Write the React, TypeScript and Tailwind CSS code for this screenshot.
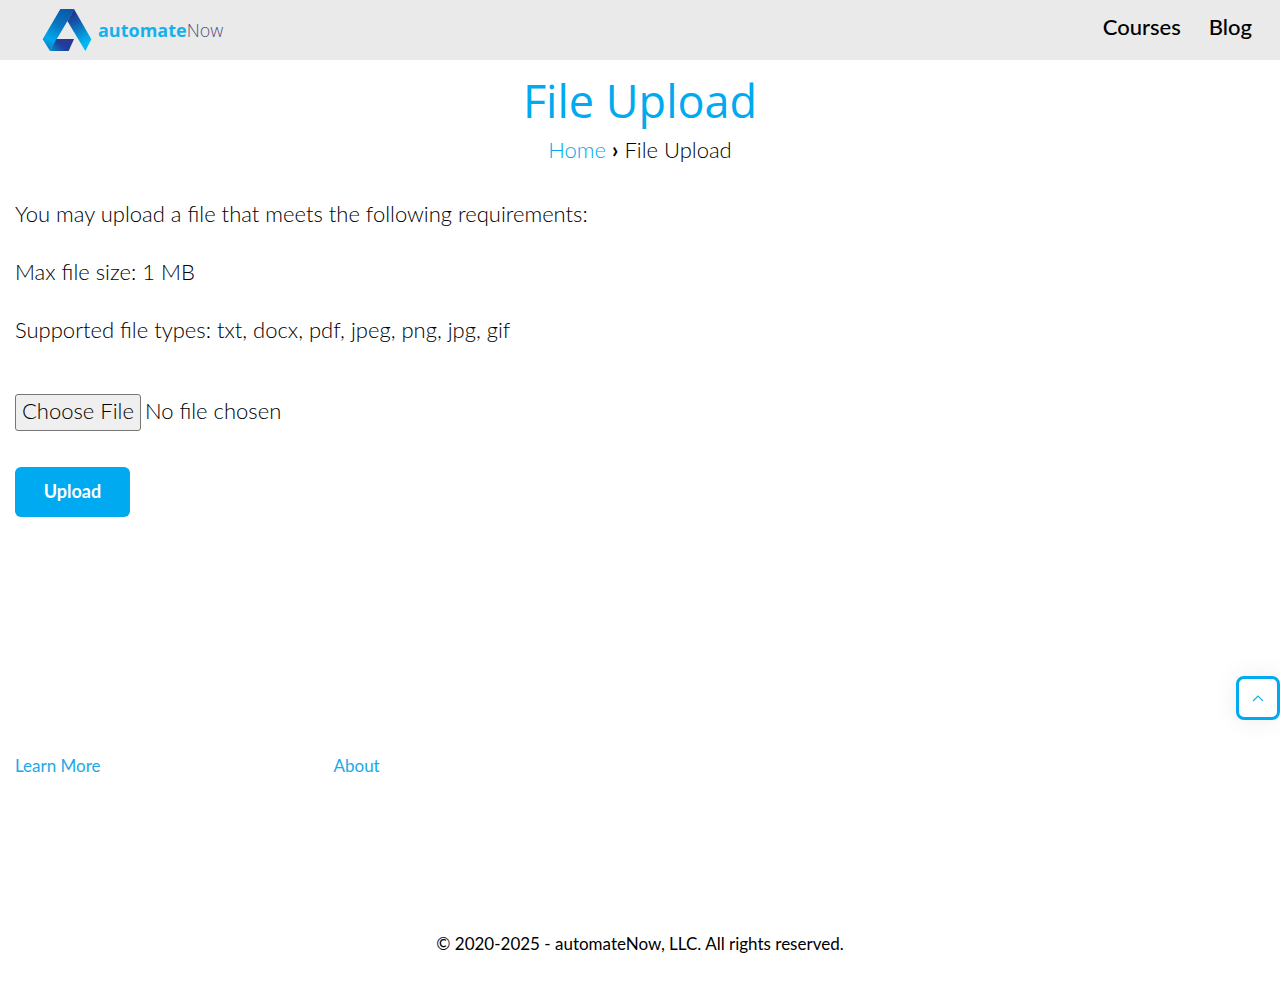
import React from "react";

function Logo() {
  return (
    <a href="#home" aria-label="automateNow" className="flex items-center font-['Open_Sans',sans-serif] text-lg leading-6">
      <svg viewBox="36 24 150 132" className="h-11 w-[50px]" aria-hidden="true">
        <defs>
          <linearGradient id="left" gradientUnits="userSpaceOnUse" x1="110" y1="27" x2="52" y2="142">
            <stop offset="0" stopColor="#0b57a8" />
            <stop offset="0.4" stopColor="#0874bd" />
            <stop offset="0.8" stopColor="#00a9ec" />
            <stop offset="1" stopColor="#0788cd" />
          </linearGradient>
          <linearGradient id="right" gradientUnits="userSpaceOnUse" x1="120" y1="35" x2="175" y2="140">
            <stop offset="0" stopColor="#2a2c88" />
            <stop offset="0.3" stopColor="#1357a8" />
            <stop offset="0.6" stopColor="#078bd1" />
            <stop offset="0.9" stopColor="#00b9f5" />
          </linearGradient>
          <linearGradient id="base" x1="0" y1="0.8" x2="1" y2="0.3">
            <stop offset="0" stopColor="#0a82c8" />
            <stop offset="0.5" stopColor="#203f9b" />
            <stop offset="1" stopColor="#2b3490" />
          </linearGradient>
        </defs>
        <path d="M112 63L132 27L184 118L166 153Z" fill="url(#right)" />
        <path d="M91 27H133L112 64L80 118L60 153L38 118Z" fill="url(#left)" />
        <path d="M79 117H132L116 153H60Z" fill="url(#base)" />
      </svg>
      <span className="pl-1.5 font-bold text-[#16b1ec]">automate</span>
      <span className="font-light text-[#55527e]">Now</span>
    </a>
  );
}

export default function App() {
  return (
    <div className="bg-white font-[Lato,sans-serif] text-[22px] font-light text-black">
      <header className="flex h-[60px] items-center justify-between bg-[#eaeaea] pr-7 pl-[42px]">
        <Logo />
        <nav className="flex gap-7 pb-1.5 leading-8 font-medium">
          <a href="#courses">Courses</a>
          <a href="#blog">Blog</a>
        </nav>
      </header>
      <main className="px-[15px]">
        <div className="pt-3 text-center">
          <h1 className="font-['Open_Sans',sans-serif] text-[45px] leading-[58px] font-normal text-[#00aaf0]">File Upload</h1>
          <nav aria-label="Breadcrumb" className="leading-10">
            <a href="#home" className="text-[#00aaf0]">Home</a>
            <span className="px-1.5 font-bold">›</span>
            <span>File Upload</span>
          </nav>
        </div>
        <div className="flex flex-col gap-[22px] pt-[26px] leading-9">
          <p>You may upload a file that meets the following requirements:</p>
          <p>Max file size: 1 MB</p>
          <p>Supported file types: txt, docx, pdf, jpeg, png, jpg, gif</p>
        </div>
        <form className="pt-[46px]" onSubmit={(e) => e.preventDefault()}>
          <input
            type="file"
            aria-label="Choose a file to upload"
            className="block h-[37px] w-full leading-8 file:mr-1 file:h-[37px] file:rounded-[3px] file:border file:border-solid file:border-[#767676] file:bg-[#efefef] file:px-1.5 file:pb-1 file:text-black"
          />
          <button type="submit" className="mt-9 h-[50px] w-[115px] rounded-md bg-[#00aaf0] pb-0.5 text-lg leading-6 font-bold text-white">
            Upload
          </button>
        </form>
      </main>
      <div className="flex justify-end pt-[159px]">
        <button type="button" aria-label="Back to top" className="flex size-11 items-center justify-center rounded-lg border-3 border-[#00aaf0] bg-white shadow-[0_0_24px_rgba(0,0,0,0.08)]">
          <svg viewBox="0 0 12 8" className="h-2 w-3" fill="none" stroke="#16adea" strokeWidth="1.2" aria-hidden="true">
            <path d="M1 7L6 2L11 7" />
          </svg>
        </button>
      </div>
      <footer className="text-[17px] leading-6 font-normal">
        <nav className="grid grid-cols-4 px-[15px] pt-[34px] text-[#1ba9e8]">
          <a href="#learn">Learn More</a>
          <a href="#about" className="pl-1.5">About</a>
        </nav>
        <p className="pt-[154px] pb-10 text-center">© 2020-2025 - automateNow, LLC. All rights reserved.</p>
      </footer>
    </div>
  );
}
